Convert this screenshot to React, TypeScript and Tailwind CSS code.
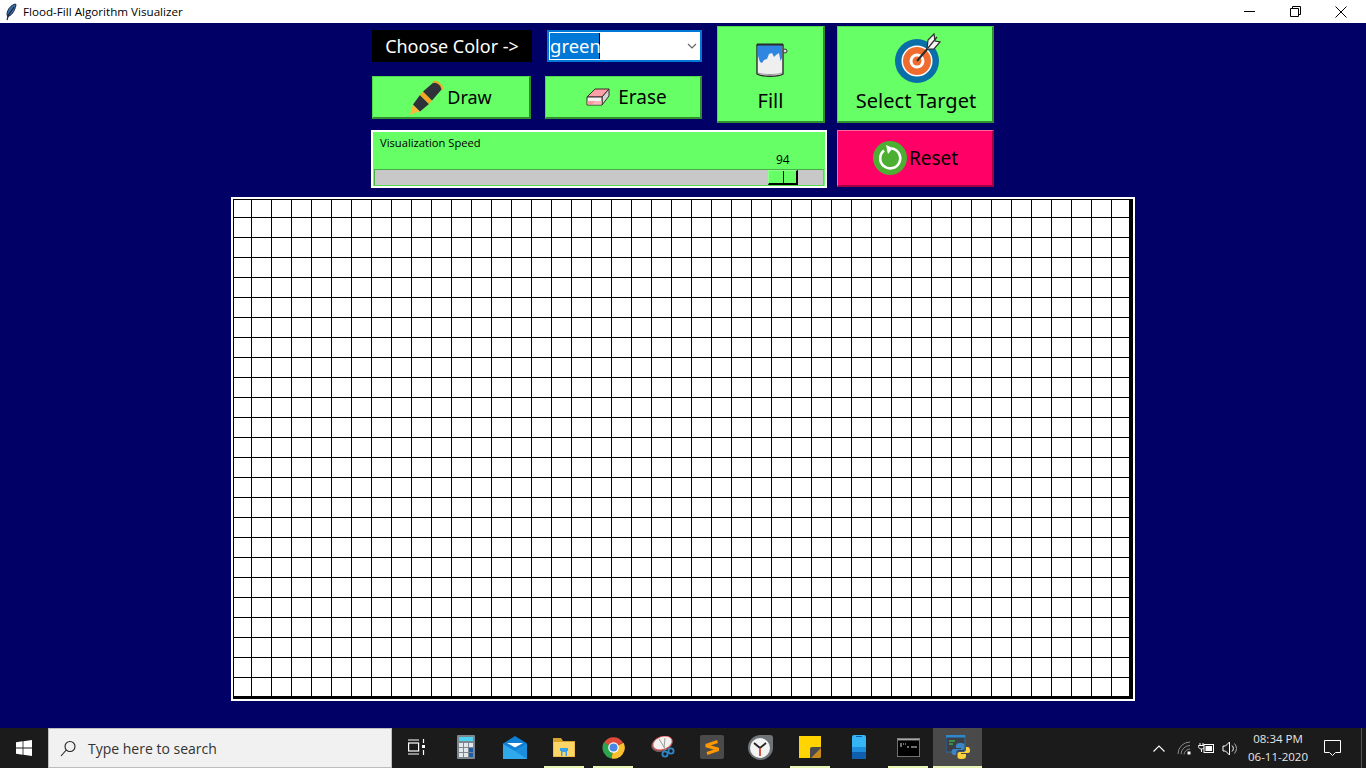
import React from "react";

const comic = "[font-family:'Noto_Sans',sans-serif]";
const ui = "[font-family:'Open_Sans','Noto_Sans',sans-serif]";
const raised = "border-t border-l border-t-[#4ed84e] border-l-[#4ed84e] border-r-2 border-b-2 border-r-[#2f8f2f] border-b-[#2f8f2f]";

const Feather = () => (
  <svg width="12" height="18" viewBox="0 0 12 18">
    <path d="M10.500 1C6 2 2.500 6 2 11l.5 2.500C6 13 9.500 9 11 2z" fill="#3a6ea5" stroke="#16263d" strokeWidth="1" />
    <path d="M9 4L3.500 12 2 17" fill="none" stroke="#16263d" strokeWidth="1.200" />
  </svg>
);

const Pen = () => (
  <svg width="34" height="35" viewBox="0 0 34 35" className="shrink-0">
    <path d="M0 34.500l3-10 7 7z" fill="#f9b83c" />
    <path d="M3 24.500L10 15l9 9-9 7.500z" fill="#30323a" />
    <path d="M10 15l3-3.500 9 9-3 3.500z" fill="#f5a623" />
    <path d="M13 11.500L24 2c3-2 9 3 8 7L22 20.500z" fill="#30323a" />
    <path d="M23 2.500c3-2.500 10 3 9 7" fill="none" stroke="#f5a623" strokeWidth="1.800" />
  </svg>
);

const Eraser = () => (
  <svg width="24" height="18" viewBox="0 0 24 18" className="shrink-0">
    <path d="M1 9L9 1h14l-7 8z" fill="#ffa0a6" stroke="#3a2a2a" strokeWidth="1" />
    <path d="M16 9l7-8v7l-7 9z" fill="#d4d4d4" stroke="#3a2a2a" strokeWidth="1" />
    <path d="M1 9h15v8H1z" fill="#f4f4f4" stroke="#3a2a2a" strokeWidth="1" />
    <path d="M1.500 13h8l-3 3.500h-5z" fill="#ff9aa2" />
    <path d="M9.500 13h6v3.500h-9z" fill="#ffb4ba" />
  </svg>
);

const Bucket = () => (
  <svg width="32" height="35" viewBox="0 0 32 35">
    <path d="M1 3h26v29c-4 3-21 3-26 0z" fill="#efefef" stroke="#2b2b2b" strokeWidth="1.400" />
    <path d="M2 3h24v13l-1.500 3-1.500-8-3 2-2 2-2-4-3 1-2 5-3 1-2 3-2-1-1-3-1-3z" fill="#2f86e0" />
    <path d="M1 2.500h26" stroke="#2b2b2b" strokeWidth="2" />
    <circle cx="29" cy="9" r="2" fill="#ddd" stroke="#333" strokeWidth="1" />
    <path d="M2 31c5 2 19 2 24 0" stroke="#999" strokeWidth="1" fill="none" />
  </svg>
);

const Target = () => (
  <svg width="46" height="50" viewBox="0 0 46 50">
    <circle cx="22" cy="28" r="22" fill="#0a6fa8" />
    <circle cx="22" cy="28" r="15.500" fill="#fff" />
    <circle cx="22" cy="28" r="14" fill="#ef6c2e" />
    <circle cx="22" cy="28" r="7.500" fill="#fff" />
    <circle cx="22" cy="28" r="4.500" fill="#ef6c2e" />
    <path d="M22 28L34 14" stroke="#2b2b2b" strokeWidth="2" />
    <path d="M32 16l1-9 6-6 1 7 5 1-6 7z" fill="#f5f5f5" stroke="#2b2b2b" strokeWidth="1.200" />
    <path d="M33 15L42 4" stroke="#2b2b2b" strokeWidth="1.200" />
  </svg>
);

const ResetIcon = () => (
  <svg width="36" height="36" viewBox="0 0 36 36" className="shrink-0">
    <circle cx="18" cy="18" r="17" fill="#4caf32" />
    <path d="M12 10.500A10 10 0 1 0 20 8.500" fill="none" stroke="#fff" strokeWidth="2.600" />
    <path d="M14 5l7 3-5 6z" fill="#fff" />
  </svg>
);

const WinLogo = () => (
  <svg width="16" height="16" viewBox="0 0 16 16">
    <path d="M0 2.200l6.600-.9v6.300H0zM7.400 1.200L16 0v7.600H7.400zM0 8.400h6.600v6.300L0 13.800zM7.400 8.400H16V16l-8.600-1.200z" fill="#fff" />
  </svg>
);

const SearchGlass = () => (
  <svg width="16" height="17" viewBox="0 0 16 17" fill="none" stroke="#222" strokeWidth="1.100">
    <circle cx="10" cy="6.500" r="5" />
    <path d="M6.300 10L1 16" />
  </svg>
);

const TaskView = () => (
  <svg width="17" height="16" viewBox="0 0 17 16" fill="none" stroke="#fff" strokeWidth="1.200">
    <path d="M0 1h11M0 15h11" />
    <rect x="0.600" y="4" width="10" height="8" />
    <path d="M15.500 0v4M15.500 11v5" />
    <rect x="14" y="6" width="3" height="3" fill="#fff" stroke="none" />
  </svg>
);

const Calc = () => (
  <svg width="18" height="24" viewBox="0 0 18 24">
    <rect width="18" height="24" rx="1" fill="#7c8791" />
    <rect x="2" y="2" width="14" height="4" fill="#4fd2f0" />
    {[0, 1, 2].flatMap((r) =>
      [0, 1, 2].map((c) => (
        <rect key={`${r}${c}`} x={2 + c * 5} y={8 + r * 5} width="4" height="4" fill={c === 2 && r > 0 ? "#1b5fa8" : "#e4e8ea"} />
      ))
    )}
  </svg>
);

const Mail = () => (
  <svg width="24" height="23" viewBox="0 0 24 23">
    <path d="M12 0l12 7.500V23H0V7.500z" fill="#0f7fd6" />
    <path d="M4 7h16l-8 4.500z" fill="#fff" />
    <path d="M0 8l12 7 12-7v15H0z" fill="#2fa8ec" />
    <path d="M12 15l12-7v15z" fill="#1c8fdc" />
  </svg>
);

const Folder = () => (
  <svg width="22" height="19" viewBox="0 0 22 19">
    <path d="M0 0h8l2 3h12v16H0z" fill="#d9a42c" />
    <rect x="0.500" y="4" width="21" height="14.500" fill="#fbd568" />
    <path d="M7 10h8v3h-1v5h-6v-5H7z" fill="#3aa0e8" />
    <rect x="9.500" y="14" width="3" height="4.500" fill="#fbd568" />
  </svg>
);

const Chrome = () => (
  <svg width="23" height="23" viewBox="0 0 24 24">
    <path d="M12 12L2 7a11.500 11.500 0 0 1 20 0z" fill="#e04a3a" />
    <path d="M12 12L2 6.500A11.500 11.500 0 0 0 10 23.500z" fill="#2da44e" />
    <path d="M12 12l10.500-5A11.500 11.500 0 0 1 10 23.500z" fill="#fbc02d" />
    <circle cx="12" cy="12" r="5.500" fill="#fff" />
    <circle cx="12" cy="12" r="4.200" fill="#4a86e8" />
  </svg>
);

const Snip = () => (
  <svg width="24" height="22" viewBox="0 0 24 22">
    <ellipse cx="11" cy="8" rx="11" ry="7.500" transform="rotate(-20 11 8)" fill="#7a5a5a" />
    <ellipse cx="11.500" cy="7" rx="10" ry="6.500" transform="rotate(-20 11.500 7)" fill="#f4f1f1" stroke="#d44" strokeWidth="0.800" />
    <path d="M8 3l7 11M14 2l-1 10" stroke="#999" strokeWidth="1" />
    <circle cx="14" cy="18" r="2.600" fill="none" stroke="#2f86c8" strokeWidth="1.800" />
    <circle cx="20" cy="15" r="2.600" fill="none" stroke="#2f86c8" strokeWidth="1.800" />
  </svg>
);

const Sublime = () => (
  <svg width="24" height="24" viewBox="0 0 24 24">
    <rect width="24" height="24" rx="2" fill="#4a4a4a" />
    <path d="M17.500 6.500L7 10v1l10.500 3v1L7 18.500" fill="none" stroke="#ff9800" strokeWidth="3" />
  </svg>
);

const Clock = () => (
  <svg width="25" height="25" viewBox="0 0 25 25">
    <path d="M12.500 0H22a3 3 0 0 1 3 3v9.500A12.500 12.500 0 1 1 12.500 0z" fill="#6f7479" />
    <circle cx="12" cy="13" r="10" fill="#f3f3f3" />
    <path d="M12 13L6 8M12 13l6-5" stroke="#222" strokeWidth="1.800" />
    <path d="M12 13v8" stroke="#d6452c" strokeWidth="1.800" />
  </svg>
);

const Sticky = () => (
  <svg width="22" height="22" viewBox="0 0 22 22">
    <path d="M0 0h22v11l-11 11H0z" fill="#ffd400" />
    <path d="M11 22V13a2 2 0 0 1 2-2h9v9a2 2 0 0 1-2 2z" fill="#4a4a4a" />
    <path d="M12 22l10-10v9l-1 1z" fill="#c68a1e" />
  </svg>
);

const Phone = () => (
  <svg width="14" height="24" viewBox="0 0 14 24">
    <rect width="14" height="24" rx="2" fill="#35b5f4" />
    <rect y="12" width="14" height="5" fill="#1e8edc" />
    <path d="M0 17h14v5a2 2 0 0 1-2 2H2a2 2 0 0 1-2-2z" fill="#0f5fae" />
    <rect x="4" y="1" width="6" height="1" fill="#0f5fae" />
  </svg>
);

const Cmd = () => (
  <svg width="23" height="19" viewBox="0 0 23 19">
    <rect width="23" height="19" fill="#8c8c8c" />
    <rect x="0.800" y="0.800" width="21.400" height="17.400" fill="#000" />
    <rect x="0.800" y="0.800" width="21.400" height="1.600" fill="#a9a9a9" />
    <path d="M3 6h2M6 6h1M8 6h1M3 8h2M10 9l2 0M14 9h6" stroke="#ddd" strokeWidth="1" />
  </svg>
);

const Python = () => (
  <svg width="24" height="24" viewBox="0 0 24 24">
    <rect x="0" y="1" width="19" height="16" fill="#3c3f45" stroke="#2b6ea8" strokeWidth="1" />
    <rect x="0" y="0" width="19" height="2.500" fill="#2d88d0" />
    <path d="M3 6h6M3 9h4" stroke="#3ea84e" strokeWidth="1.400" />
    <path d="M14 8c-3 0-4 1-4 3v2h5v1H8c-2 0-2.500 1.500-2.500 3s1 3 2.500 3h2v-2.500c0-1.500 1-2.500 2.500-2.500h4c1.200 0 2-1 2-2v-3c0-1.500-1.500-2-4.500-2z" fill="#3c86c8" />
    <path d="M16 24c3 0 4-1 4-3v-2h-5v-1h7c2 0 2-1.500 2-3s-1-3-2-3h-2v2.500c0 1.500-1 2.500-2.500 2.500h-4c-1.200 0-2 1-2 2v3c0 1.500 1.500 2 4.500 2z" fill="#fdd23c" />
  </svg>
);

const Wifi = () => (
  <svg width="16" height="14" viewBox="0 0 16 14" fill="none" stroke="#8a8a8a" strokeWidth="1">
    <path d="M1 13A12 12 0 0 1 13 1M4 13.200A9 9 0 0 1 13 4.500M7 13.400A6 6 0 0 1 13 8" />
    <rect x="10.500" y="10.500" width="3" height="3" fill="#fff" stroke="none" />
  </svg>
);

const Battery = () => (
  <svg width="16" height="14" viewBox="0 0 16 14">
    <path d="M2 2v2M5 2v2M.5 4.500h6v1c0 1.500-1.500 2.500-3 2.500s-3-1-3-2.500z" stroke="#fff" strokeWidth="1" fill="none" />
    <path d="M3.500 8v3" stroke="#fff" />
    <rect x="6" y="3.500" width="9.500" height="8" fill="#1b1b1b" stroke="#fff" />
    <rect x="7.500" y="5" width="6.500" height="5" fill="#fff" />
  </svg>
);

const Volume = () => (
  <svg width="16" height="15" viewBox="0 0 16 15" fill="none" stroke="#fff" strokeWidth="1">
    <path d="M1 5h2.500L7.500 1v13l-4-4H1z" />
    <path d="M10 4.500a4 4 0 0 1 0 6" />
    <path d="M12.500 2.500a8 8 0 0 1 0 10" stroke="#aaa" />
  </svg>
);

const Bubble = () => (
  <svg width="17" height="16" viewBox="0 0 17 16" fill="none" stroke="#fff" strokeWidth="1">
    <path d="M.5.500h16v12h-5l-3 3-3-3h-5z" />
  </svg>
);

const Cells = () => {
  const cells = [];
  for (let r = 0; r < 25; r++) {
    for (let c = 0; c < 45; c++) {
      cells.push(
        <div
          key={`${r}-${c}`}
          className={`border-black ${c < 44 ? "border-r" : ""} ${r < 24 ? "border-b" : ""}`}
        />
      );
    }
  }
  return (
    <div className="grid h-full w-full grid-cols-[18px_repeat(43,20px)_17px] grid-rows-[18px_repeat(23,20px)_18px]">
      {cells}
    </div>
  );
};

const tasks: { icon: React.ReactNode; bar?: string; active?: boolean }[] = [
  { icon: <TaskView /> },
  { icon: <Calc /> },
  { icon: <Mail /> },
  { icon: <Folder />, bar: "w-10" },
  { icon: <Chrome />, bar: "w-10" },
  { icon: <Snip /> },
  { icon: <Sublime /> },
  { icon: <Clock /> },
  { icon: <Sticky />, bar: "w-10" },
  { icon: <Phone /> },
  { icon: <Cmd />, bar: "w-10" },
  { icon: <Python />, bar: "w-full", active: true },
];

export default function App() {
  return (
    <div className={`flex h-screen w-full flex-col overflow-hidden bg-[#000066] ${ui}`}>
      {/* title bar */}
      <div className="flex h-[23px] shrink-0 items-center bg-white text-black">
        <div className="ml-[5px] flex w-[18px] items-center">
          <Feather />
        </div>
        <span className="text-[11.650px] leading-none">Flood-Fill Algorithm Visualizer</span>
        <div className="ml-auto mr-[2px] flex items-center">
          <div className="flex w-[46px] justify-center">
            <div className="h-px w-[11px] bg-black" />
          </div>
          <div className="flex w-[46px] justify-center">
            <svg width="11" height="11" viewBox="0 0 11 11" fill="none" stroke="#000">
              <path d="M.5 2.500h8v8h-8zM2.500 2.500v-2h8v8h-2" />
            </svg>
          </div>
          <div className="flex w-[46px] justify-center">
            <svg width="12" height="12" viewBox="0 0 12 12" stroke="#000">
              <path d="M.5.500l11 11M11.500.500l-11 11" />
            </svg>
          </div>
        </div>
      </div>

      {/* main */}
      <div className="flex min-h-0 flex-1 flex-col items-center pt-[3px]">
        <div className="flex w-[624px] flex-col gap-[7px]">
          <div className="flex h-[97px]">
            <div className="flex w-[346px] flex-col pl-px pt-[4px]">
              <div className="flex h-[32px]">
                <div className={`flex w-[160px] items-center justify-center bg-black text-[18px] text-white ${comic}`}>
                  Choose Color -&gt;
                </div>
                <div className={`ml-[15px] flex w-[155px] items-center border-2 border-[#0078d7] bg-white pl-px text-[18.500px] ${comic}`}>
                  <span className="flex h-[26px] w-[50px] items-center border-r border-r-black bg-[#0078d7] leading-none text-white">green</span>
                  <svg className="ml-auto mr-[3px]" width="10" height="6" viewBox="0 0 10 6" fill="none" stroke="#666" strokeWidth="1.200">
                    <path d="M1 1l4 4 4-4" />
                  </svg>
                </div>
              </div>
              <div className={`mt-[14px] flex h-[43px] gap-[14px] text-black ${comic}`}>
                <div className={`flex w-[159px] items-center justify-center gap-[3px] bg-[#66ff66] text-[18px] ${raised}`}>
                  <Pen />
                  <span>Draw</span>
                </div>
                <div className={`flex w-[157px] items-center justify-center gap-[8px] bg-[#66ff66] pl-[7px] text-[19px] ${raised}`}>
                  <Eraser />
                  <span>Erase</span>
                </div>
              </div>
            </div>
            <div className={`flex w-[108px] flex-col items-center bg-[#66ff66] pt-[16px] text-[20px] text-black ${comic} ${raised}`}>
              <div className="ml-[3px] -mt-px"><Bucket /></div>
              <span className="mt-[11px] leading-[26px]">Fill</span>
            </div>
            <div className={`ml-[12px] flex w-[157px] flex-col items-center bg-[#66ff66] pl-[2px] pt-[6px] text-[20px] text-black ${comic} ${raised}`}>
              <div className="ml-[3px]"><Target /></div>
              <span className="mt-[5px] leading-[26px]">Select Target</span>
            </div>
          </div>

          <div className="flex h-[58px] gap-[10px]">
            <div className="flex w-[456px] flex-col border-2 border-white bg-[#66ff66] text-[12px] text-black">
              <div className="ml-[7px] mt-[4px] h-[14px] text-[11.200px] leading-[14px]">Visualization Speed</div>
              <div className="ml-[403px] mt-[3px] h-[14px] leading-[14px]">94</div>
              <div className="ml-px mr-px mt-[2px] flex h-[17px] border border-[#45b045] border-b-[#55dd55] border-r-[#55dd55] bg-[#c8c8c8]">
                <div className="ml-[393px] flex h-[15px] w-[30px] border-b-2 border-r-2 border-l border-t border-b-black border-l-[#8fff8f] border-r-black border-t-[#8fff8f] bg-[#66ff66]">
                  <div className="ml-[14px] h-full w-px bg-black" />
                </div>
              </div>
            </div>
            <div className={`flex h-[57px] w-[157px] items-center justify-center gap-px border-b-2 border-l border-r-2 border-t border-b-[#a0003f] border-l-[#ff66a0] border-r-[#a0003f] border-t-[#ff66a0] bg-[#ff0066] text-[19px] text-black ${comic}`}>
              <ResetIcon />
              <span>Reset</span>
            </div>
          </div>
        </div>

        {/* canvas */}
        <div className="mt-[9px] h-[504px] w-[904px] border-2 border-white bg-white">
          <div className="h-[500px] w-[900px] border-b-[3px] border-l border-r-[4px] border-t border-black bg-white">
            <Cells />
          </div>
        </div>
      </div>

      {/* taskbar */}
      <div className="flex h-10 shrink-0 items-stretch bg-[#1b1b1b]">
        <div className="flex w-12 items-center justify-center">
          <WinLogo />
        </div>
        <div className="flex w-[344px] items-center border border-[#bdbdbd] bg-[#f1f1f1] pl-[11px] text-[14px] text-[#333]">
          <SearchGlass />
          <span className="ml-[12px]">Type here to search</span>
        </div>
        <div className="flex">
          {tasks.map((t, i) => (
            <div
              key={i}
              className={`flex w-[49.200px] flex-col items-center ${t.active ? "bg-[#4a4a4a]" : ""}`}
            >
              <div className="flex h-[38px] items-center justify-center">{t.icon}</div>
              {t.bar && <div className={`h-[2px] ${t.bar} bg-[#e8f6b4]`} />}
            </div>
          ))}
        </div>
        <div className="ml-auto flex items-center text-white">
          <svg width="12" height="7" viewBox="0 0 12 7" fill="none" stroke="#fff" strokeWidth="1.100">
            <path d="M.5 6.500L6 1l5.500 5.500" />
          </svg>
          <div className="ml-[12px]"><Wifi /></div>
          <div className="ml-[5px]"><Battery /></div>
          <div className="ml-[8px]"><Volume /></div>
          <div className="ml-[10px] flex w-[60px] flex-col items-center text-[11.500px] leading-[18px] text-[#e6e6e6]">
            <span>08:34 PM</span>
            <span>06-11-2020</span>
          </div>
          <div className="ml-[16px]"><Bubble /></div>
          <div className="ml-[20px] mr-[4px] h-full w-px bg-[#555]" />
        </div>
      </div>
    </div>
  );
}
